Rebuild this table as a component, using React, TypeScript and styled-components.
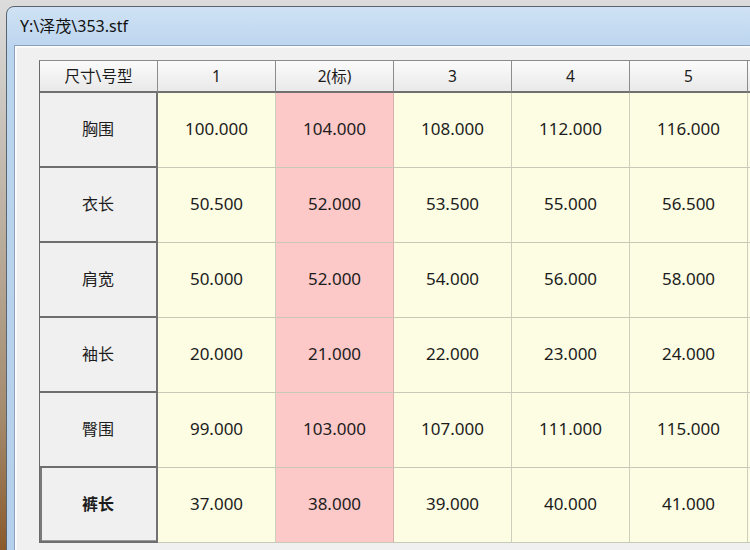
import React from "react";
import styled, { createGlobalStyle, css } from "styled-components";

const Global = createGlobalStyle`
  html, body {
    margin: 0;
    padding: 0;
    width: 750px;
    height: 550px;
    overflow: hidden;
    background: linear-gradient(180deg, #dcdcdc 0px, #c9c3bb 120px, #a38a6c 420px, #8a5a2c 550px);
  }
  * { box-sizing: border-box; }
`;

const Window = styled.div`
  margin: 6px 0 0 6px;
  width: 760px;
  height: 560px;
  border: 1px solid #5a6470;
  border-radius: 8px 0 0 0;
  background: linear-gradient(180deg, #cfe2f5 0px, #bcd5ee 40px, #b5d0ec 100%);
  display: flex;
  flex-direction: column;
  overflow: hidden;
`;

const TitleBar = styled.div`
  height: 38px;
  display: flex;
  align-items: center;
  padding: 0 0 2px 13px;
  font-family: "Noto Sans", "Noto Sans CJK SC", sans-serif;
  font-size: 16px;
  color: #111;
`;

const Client = styled.div`
  flex: 1;
  margin-left: 7px;
  border-top: 1px solid #8aa2bd;
  border-left: 1px solid #8aa2bd;
  background: #f0f0f0;
  box-shadow: inset 1px 1px 0 #ffffff, inset 2px 2px 0 #fafafa;
  padding: 14px 0 0 24px;
  overflow: hidden;
`;

const Grid = styled.div`
  display: grid;
  grid-template-columns: repeat(7, 118px);
  grid-template-rows: 32px repeat(6, 75px);
  border-left: 1px solid #6a6a6a;
  border-top: 1px solid #8a8a8a;
  font-family: "Noto Sans", "Noto Sans CJK SC", sans-serif;
  color: #1c1c1c;
`;

const cellBase = css`
  display: flex;
  align-items: center;
  justify-content: center;
  white-space: nowrap;
`;

const HeaderCell = styled.div`
  ${cellBase}
  font-size: 15.5px;
  background: linear-gradient(180deg, #fbfbfb 0%, #f2f2f2 50%, #e9e9e9 100%);
  border-right: 1px solid #8c8c8c;
  border-bottom: 2px solid #707070;
  padding-bottom: 1px;
`;

const RowHeaderCell = styled.div<{ $selected?: boolean }>`
  ${cellBase}
  font-family: "Noto Sans CJK SC", "Noto Sans", sans-serif;
  font-size: 16px;
  background: #f0f0f0;
  border-right: 2px solid #727272;
  border-bottom: 2px solid #6e6e6e;
  padding-bottom: 3px;
  font-weight: ${(p) => (p.$selected ? 700 : 400)};
  ${(p) =>
    p.$selected &&
    css`
      box-shadow: inset 2px 0 0 #7a7a7a, inset 0 -1px 0 #9a9a9a;
    `}
`;

const DataCell = styled.div<{ $standard?: boolean }>`
  ${cellBase}
  font-size: 17px;
  background: ${(p) => (p.$standard ? "#fcc8c8" : "#fdfde3")};
  border-right: 1px solid ${(p) => (p.$standard ? "#d8b0ac" : "#cfcfbd")};
  border-bottom: 1px solid #c9c9b8;
  padding-bottom: 3px;
`;

const headers = ["尺寸\\号型", "1", "2(标)", "3", "4", "5", ""];

const rows: { name: string; values: string[] }[] = [
  { name: "胸围", values: ["100.000", "104.000", "108.000", "112.000", "116.000", ""] },
  { name: "衣长", values: ["50.500", "52.000", "53.500", "55.000", "56.500", ""] },
  { name: "肩宽", values: ["50.000", "52.000", "54.000", "56.000", "58.000", ""] },
  { name: "袖长", values: ["20.000", "21.000", "22.000", "23.000", "24.000", ""] },
  { name: "臀围", values: ["99.000", "103.000", "107.000", "111.000", "115.000", ""] },
  { name: "裤长", values: ["37.000", "38.000", "39.000", "40.000", "41.000", ""] },
];

export default function App() {
  return (
    <>
      <Global />
      <Window>
        <TitleBar>Y:\泽茂\353.stf</TitleBar>
        <Client>
          <Grid>
            {headers.map((h, i) => (
              <HeaderCell key={i}>{h}</HeaderCell>
            ))}
            {rows.map((r, ri) => (
              <React.Fragment key={r.name}>
                <RowHeaderCell $selected={ri === rows.length - 1}>{r.name}</RowHeaderCell>
                {r.values.map((v, ci) => (
                  <DataCell key={ci} $standard={ci === 1}>
                    {v}
                  </DataCell>
                ))}
              </React.Fragment>
            ))}
          </Grid>
        </Client>
      </Window>
    </>
  );
}
